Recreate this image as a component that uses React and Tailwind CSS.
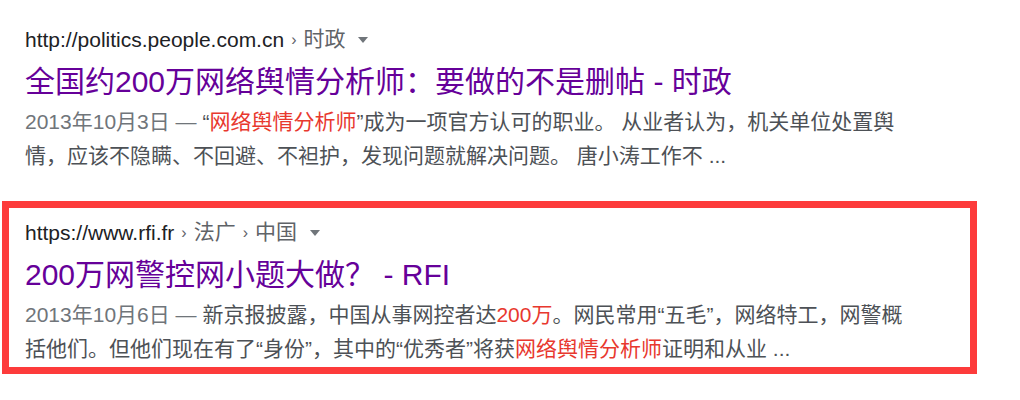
const FONT = { fontFamily: '"Liberation Sans", Arial, "Noto Sans CJK SC", sans-serif' }

function Caret() {
  return (
    <svg width="12" height="8" viewBox="0 0 12 8" className="ml-[12px] inline-block">
      <path d="M1 1 L11 1 L6 7 Z" fill="#70757a" />
    </svg>
  )
}

function Result({ url, crumbs, title, lines }) {
  return (
    <div>
      <div className="flex items-center h-[30px] text-[21px] leading-[30px] whitespace-nowrap">
        <span className="text-[#202124]">{url}</span>
        {crumbs.map((c) => (
          <span key={c} className="text-[#5f6368]">
            <span className="text-[16px] mx-[7px] relative top-[-1px]">›</span>
            {c}
          </span>
        ))}
        <Caret />
      </div>
      <div className="mt-[7px] text-[30px] leading-[40px] text-[#660099] whitespace-nowrap">{title}</div>
      <div className="mt-[3px] text-[21px] leading-[34px] text-[#4d5156] whitespace-nowrap">
        {lines.map((l, i) => (
          <div key={i}>{l}</div>
        ))}
      </div>
    </div>
  )
}

const Em = ({ children }) => <span className="text-[#e8382e]">{children}</span>
const Date = ({ children }) => <span className="text-[#70757a]">{children} — </span>

export default function App() {
  return (
    <div className="w-[1020px] h-[400px] bg-white overflow-hidden" style={FONT}>
      <div className="pt-[25px] pl-[25px]">
        <Result
          url="http://politics.people.com.cn"
          crumbs={['时政']}
          title="全国约200万网络舆情分析师：要做的不是删帖 - 时政"
          lines={[
            <>
              <Date>2013年10月3日</Date>“<Em>网络舆情分析师</Em>”成为一项官方认可的职业。 从业者认为，机关单位处置舆
            </>,
            <>情，应该不隐瞒、不回避、不袒护，发现问题就解决问题。 唐小涛工作不 ...</>,
          ]}
        />
      </div>
      <div className="mt-[28px] ml-[2px] w-[975px] border-[7px] border-[#fd3b3b] pt-[10px] pl-[16px] pb-[1px]">
        <Result
          url="https://www.rfi.fr"
          crumbs={['法广', '中国']}
          title="200万网警控网小题大做？ - RFI"
          lines={[
            <>
              <Date>2013年10月6日</Date>新京报披露，中国从事网控者达<Em>200万</Em>。网民常用“五毛”，网络特工，网警概
            </>,
            <>
              括他们。但他们现在有了“身份”，其中的“优秀者”将获<Em>网络舆情分析师</Em>证明和从业 ...
            </>,
          ]}
        />
      </div>
    </div>
  )
}
